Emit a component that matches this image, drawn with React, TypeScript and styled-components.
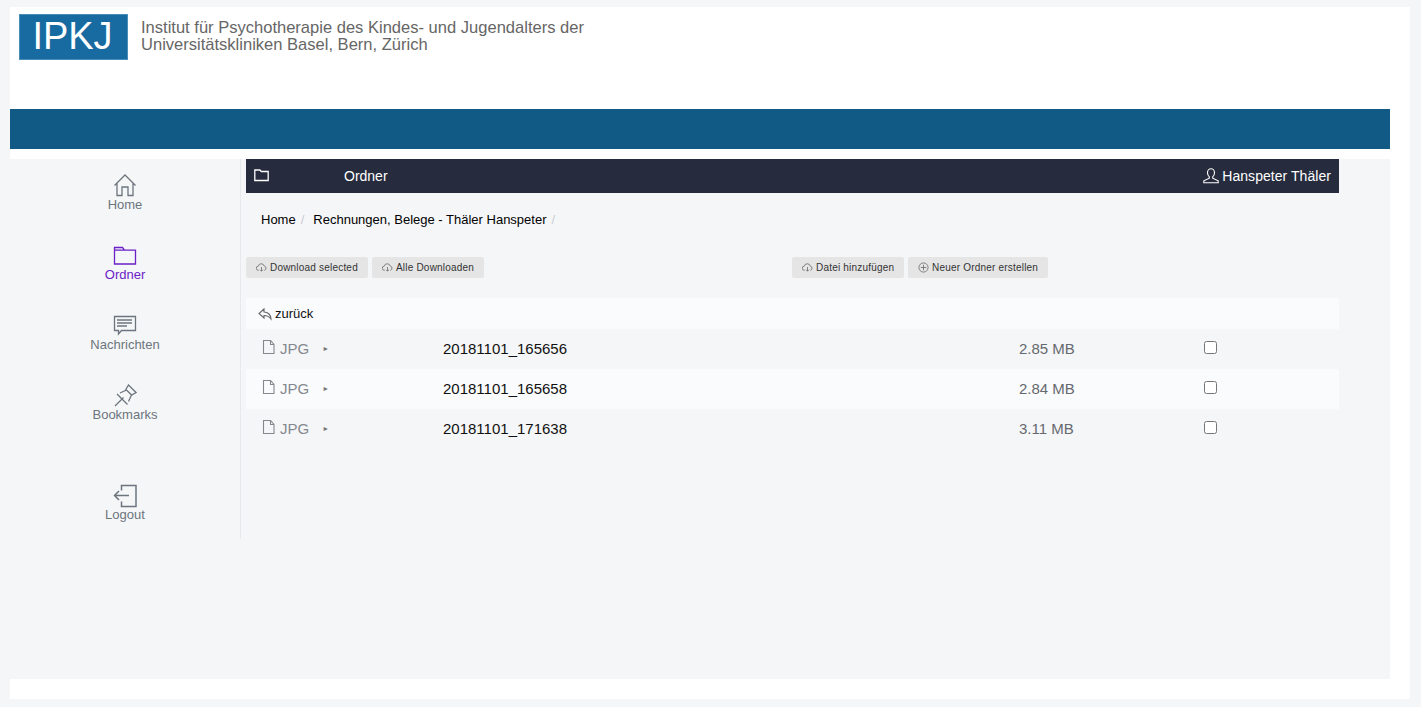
import React from "react";
import styled, { createGlobalStyle } from "styled-components";

const Global = createGlobalStyle`
  html, body { margin: 0; padding: 0; background: #f5f6f8; }
  body { font-family: "Liberation Sans", Arial, sans-serif; }
  * { box-sizing: border-box; }
`;

const Outer = styled.div`
  width: 1421px;
  height: 707px;
  padding: 7px 11px 8px 10px;
  overflow: hidden;
`;
const Sheet = styled.div`
  width: 1400px;
  height: 692px;
  background: #fff;
  padding-right: 20px;
`;
const Header = styled.header`
  height: 102px;
  padding: 7px 0 0 9px;
  display: flex;
  align-items: flex-start;
  gap: 13px;
`;
const Logo = styled.div`
  width: 109px;
  height: 46px;
  padding-right: 2px;
  background: #186ba1;
  border: 1px solid #4a8db8;
  color: #fff;
  font-size: 38px;
  line-height: 43px;
  text-align: center;
`;
const Institute = styled.div`
  padding-top: 5px;
  font-size: 16.55px;
  line-height: 17px;
  color: #666;
`;
const Band = styled.div`
  height: 40px;
  background: #115a86;
  margin-bottom: 10px;
`;
const Body = styled.div`
  height: 520px;
  background: #f5f6f8;
  display: flex;
  align-items: flex-start;
`;
const Sidebar = styled.nav`
  width: 231px;
  height: 380px;
  border-right: 1px solid #e8e9ec;
  padding-top: 15px;
  display: flex;
  flex-direction: column;
  align-items: center;
  flex: none;
`;
const NavItem = styled.a<{ $active?: boolean; $gap?: boolean }>`
  height: 70px;
  flex: none;
  margin-top: ${(p) => (p.$gap ? "30px" : "0")};
  display: flex;
  flex-direction: column;
  align-items: center;
  color: ${(p) => (p.$active ? "#6b21c8" : "#6c757d")};
  font-size: 13px;
  line-height: 15px;
  svg { display: block; width: 24px; height: 24px; margin-bottom: -1px; }
`;
const Main = styled.main`
  width: 1093px;
  margin-left: 5px;
  flex: none;
`;
const TopBar = styled.div`
  height: 34px;
  background: #262b3e;
  color: #fff;
  display: flex;
  align-items: center;
  padding: 0 8px;
  font-size: 14px;
  svg { display: block; }
`;
const TopTitle = styled.span`
  margin-left: 75px;
  flex: 1;
`;
const User = styled.span`
  display: flex;
  align-items: center;
  gap: 3px;
  letter-spacing: 0.05px;
`;
const Breadcrumb = styled.div`
  height: 64px;
  padding: 19px 0 0 15px;
  font-size: 13px;
  line-height: 15px;
  color: #000;
  display: flex;
`;
const Sep = styled.span`
  color: #c9ccd1;
  margin: 0 9px 0 5px;
`;
const Actions = styled.div`
  height: 21px;
  display: flex;
  margin-bottom: 20px;
`;
const ActionGroup = styled.div<{ $width?: number }>`
  display: flex;
  gap: 4px;
  width: ${(p) => (p.$width ? p.$width + "px" : "auto")};
`;
const ActionButton = styled.button<{ $width: number }>`
  height: 21px;
  width: ${(p) => p.$width}px;
  border: 0;
  border-radius: 2px;
  background: #e5e5e5;
  color: #333;
  padding: 0 0 0 10px;
  display: flex;
  align-items: center;
  gap: 3px;
  font-family: "Liberation Sans", sans-serif;
  font-size: 10px;
  letter-spacing: 0.2px;
  white-space: nowrap;
  svg { display: block; color: #777; flex: none; }
`;
const Back = styled.div`
  height: 31px;
  background: #fafbfd;
  display: flex;
  align-items: center;
  padding-left: 12px;
  gap: 3px;
  font-size: 13px;
  color: #111;
  svg { display: block; color: #666; }
`;
const FileRow = styled.div<{ $alt?: boolean }>`
  height: 40px;
  padding-bottom: 2px;
  background: ${(p) => (p.$alt ? "#fafbfd" : "transparent")};
  display: flex;
  align-items: center;
`;
const FileType = styled.div`
  width: 197px;
  padding-left: 15px;
  display: flex;
  align-items: center;
  color: #85898e;
  font-size: 15px;
  svg { display: block; margin: -2px 5px 0 0; color: #85898e; }
`;
const Arrow = styled.span`
  margin-left: 13px;
  font-size: 7px;
  color: #777;
`;
const FileName = styled.div`
  width: 576px;
  font-size: 15px;
  color: #111;
`;
const FileSize = styled.div`
  width: 185px;
  font-size: 15px;
  color: #66696e;
`;
const Check = styled.input`
  width: 13px;
  height: 13px;
  margin: 0 0 2px 0;
`;

const Icon = ({ size = 24, children, vb = 24, w = 1.3 }: { size?: number; children: React.ReactNode; vb?: number; w?: number }) => (
  <svg width={size} height={size} viewBox={`0 0 ${vb} ${vb}`} fill="none" stroke="currentColor" strokeWidth={w}>
    {children}
  </svg>
);

const files = [
  { name: "20181101_165656", size: "2.85 MB" },
  { name: "20181101_165658", size: "2.84 MB" },
  { name: "20181101_171638", size: "3.11 MB" },
];

const Cloud = () => (
  <Icon size={11} vb={12} w={1}>
    <path d="M3 9H2.6A2.2 2.2 0 0 1 2.4 4.6 3.4 3.4 0 0 1 9 4.4 2.4 2.4 0 0 1 9.4 9H9" />
    <path d="M6 5.5V10M4.5 8.5 6 10l1.5-1.5" />
  </Icon>
);

export default function App() {
  return (
    <Outer>
      <Global />
      <Sheet>
        <Header>
          <Logo>IPKJ</Logo>
          <Institute>
            Institut für Psychotherapie des Kindes- und Jugendalters der
            <br />
            Universitätskliniken Basel, Bern, Zürich
          </Institute>
        </Header>
        <Band />
        <Body>
          <Sidebar>
            <NavItem>
              <Icon>
                <path d="M1.500 11.500 12 1l10.500 10.500M4 9v12.500h5V13h6v8.500h5V9" />
              </Icon>
              Home
            </NavItem>
            <NavItem $active>
              <Icon>
                <path d="M1.500 20V3.500h8l2 2.700h11V20ZM1.500 6.200h10" />
              </Icon>
              Ordner
            </NavItem>
            <NavItem>
              <Icon>
                <path d="M1.500 2.500h21v14H8.500l-3 3.500v-3.500h-4ZM4 6h15M4 9h15M4 12h10" />
              </Icon>
              Nachrichten
            </NavItem>
            <NavItem>
              <Icon>
                <path d="M2 22 10.500 13.500M4 10 14.500 20.500M7 9l6.500-3 5 5-3 6.500M12.500 6 15.500 1l7.500 7.500-5 3" />
              </Icon>
              Bookmarks
            </NavItem>
            <NavItem $gap>
              <Icon w={1.5}>
                <path d="M8.500 6.500V1.500h14.500v21H8.500V17.500M1.500 11.500h14.500M6 7 1.500 11.500 6 16" />
              </Icon>
              Logout
            </NavItem>
          </Sidebar>
          <Main>
            <TopBar>
              <Icon size={15} vb={15}>
                <path d="M.8 11.500V1h5l1.500 1.500H14.200v9Z" />
              </Icon>
              <TopTitle>Ordner</TopTitle>
              <User>
                <Icon size={16} vb={16} w={1.1}>
                  <path d="M4.500 4.800a3.500 4 0 0 1 7 0c0 2-1 3.400-1.800 3.900v1.500l5.500 2.600v1.900H.8v-1.900l5.500-2.600V8.700C5.500 8.200 4.500 6.800 4.500 4.800Z" />
                </Icon>
                Hanspeter Thäler
              </User>
            </TopBar>
            <Breadcrumb>
              Home<Sep>/</Sep>Rechnungen, Belege - Thäler Hanspeter<Sep>/</Sep>
            </Breadcrumb>
            <Actions>
              <ActionGroup $width={546}>
                <ActionButton $width={122}>
                  <Cloud />
                  Download selected
                </ActionButton>
                <ActionButton $width={112}>
                  <Cloud />
                  Alle Downloaden
                </ActionButton>
              </ActionGroup>
              <ActionGroup>
                <ActionButton $width={112}>
                  <Cloud />
                  Datei hinzufügen
                </ActionButton>
                <ActionButton $width={140}>
                  <Icon size={11} vb={12} w={1}>
                    <circle cx="6" cy="6" r="5" />
                    <path d="M6 3v6M3 6h6" />
                  </Icon>
                  Neuer Ordner erstellen
                </ActionButton>
              </ActionGroup>
            </Actions>
            <Back>
              <Icon size={14} vb={14} w={1.1}>
                <path d="M6 2 1 6.500 6 11V8.500c3 0 5 .8 7 3.500 0-4-3-7-7-7Z" />
              </Icon>
              zurück
            </Back>
            {files.map((f, i) => (
              <FileRow key={f.name} $alt={i === 1}>
                <FileType>
                  <Icon size={14} vb={14} w={1.1}>
                    <path d="M2.500.5h7L13 4.500v9H2.500ZM9.500.5v4H13" />
                  </Icon>
                  JPG
                  <Arrow>►</Arrow>
                </FileType>
                <FileName>{f.name}</FileName>
                <FileSize>{f.size}</FileSize>
                <Check type="checkbox" />
              </FileRow>
            ))}
          </Main>
        </Body>
      </Sheet>
    </Outer>
  );
}
